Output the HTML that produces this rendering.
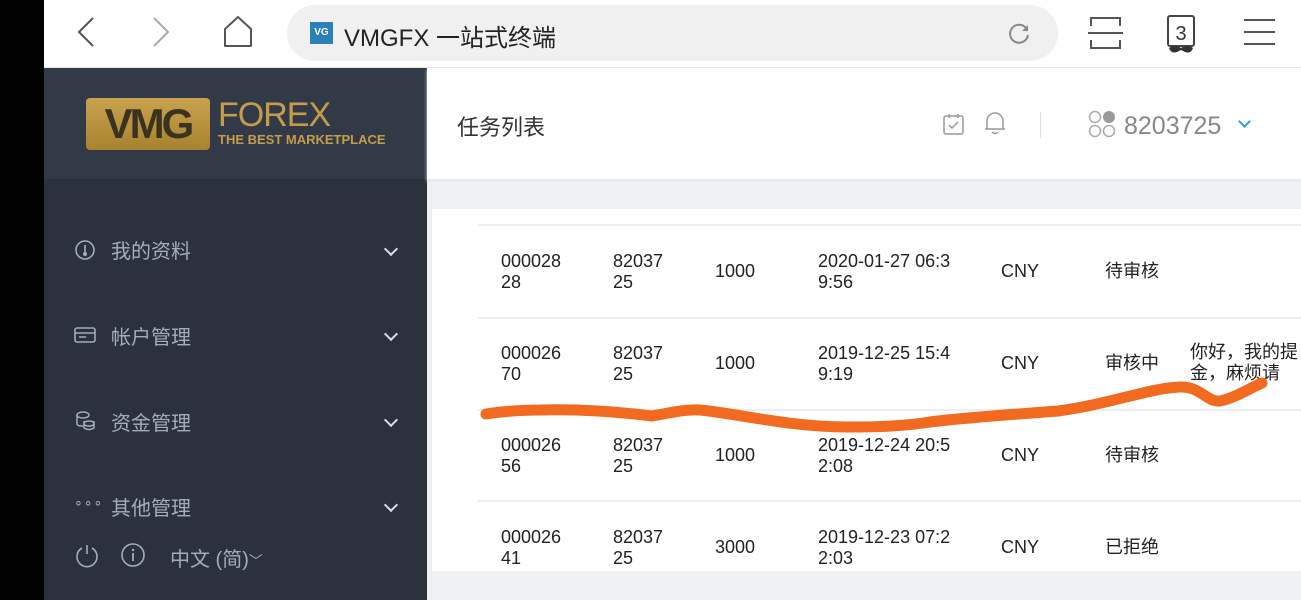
<!DOCTYPE html>
<html><head><meta charset="utf-8"><style>
*{margin:0;padding:0;box-sizing:border-box}
body{width:1301px;height:600px;overflow:hidden;background:#fff;font-family:"Liberation Sans","Noto Sans CJK SC",sans-serif;position:relative}
.abs{position:absolute}
.blk{left:0;top:0;width:44px;height:600px;background:#000}
.top{left:44px;top:0;width:1257px;height:68px;background:#fff;border-bottom:1px solid #e6e6e6}
.url{left:287px;top:5px;width:771px;height:56px;border-radius:28px;background:#f0f0f0}
.side{left:44px;top:68px;width:383px;height:532px;background:#2b313d}
.logo{left:44px;top:68px;width:383px;height:111px;background:#333a47}
.menu{color:#a5adba;font-size:20px;left:111px}
.chev{left:386px;width:10px;height:10px;border-right:2.5px solid #d8dde4;border-bottom:2.5px solid #d8dde4;transform:rotate(45deg)}
.hdr{left:427px;top:68px;width:874px;height:111px;background:#fff;box-shadow:0 2px 3px #e2e5ea}
.content{left:427px;top:180px;width:874px;height:420px;background:#eff1f5}
.card{left:432px;top:209px;width:869px;height:362px;background:#fff}
.line{left:478px;width:823px;height:2px;background:#eceef1}
.c{font-family:"Liberation Sans Narrow","Liberation Sans","Noto Sans CJK SC",sans-serif;font-size:18px;color:#222;line-height:21px}
</style></head><body>
<div class="abs blk"></div>
<div class="abs top"></div>
<svg class="abs" style="left:70px;top:14px" width="40" height="40"><path d="M23 4 L9 18 L23 32" stroke="#555" stroke-width="2" fill="none"/></svg>
<svg class="abs" style="left:145px;top:14px" width="40" height="40"><path d="M9 4 L23 18 L9 32" stroke="#aaa" stroke-width="2" fill="none"/></svg>
<svg class="abs" style="left:222px;top:14px" width="36" height="36"><path d="M3 32 V15 L16 3 L29 15 V32 Z" stroke="#555" stroke-width="2" fill="none" stroke-linejoin="round"/></svg>
<div class="abs url"></div>
<div class="abs" style="left:310px;top:22px;width:23px;height:22px;background:#2d7fb8;color:#fff;font-size:10px;font-weight:bold;line-height:22px;text-align:center">VG</div>
<div class="abs" style="left:344px;top:18px;font-size:24px;color:#222">VMGFX 一站式终端</div>
<svg class="abs" style="left:1006px;top:20px" width="26" height="26"><path d="M20 8 A9 9 0 1 0 22 15" stroke="#888" stroke-width="2" fill="none"/><path d="M22 5 V11 H16" fill="#888"/></svg>
<svg class="abs" style="left:1088px;top:16px" width="36" height="34"><path d="M3 10 V2 H32 V10 M3 24 V32 H32 V24 M0 17 H35" stroke="#555" stroke-width="2" fill="none"/></svg>
<svg class="abs" style="left:1165px;top:14px" width="36" height="40"><rect x="3" y="2" width="26" height="30" rx="2" stroke="#444" stroke-width="2" fill="none"/><text x="16" y="26" font-size="20" text-anchor="middle" fill="#333" font-family="Liberation Sans">3</text><path d="M4 34 Q10 30 16 34 Q22 30 28 34 Q26 40 20 38 L16 36 L12 38 Q6 40 4 34Z" fill="#333"/></svg>
<svg class="abs" style="left:1243px;top:18px" width="34" height="28"><path d="M1 2 H32 M1 14 H32 M1 26 H32" stroke="#555" stroke-width="2"/></svg>

<div class="abs side"></div>
<div class="abs logo"></div>
<div class="abs" style="left:86px;top:98px;width:124px;height:52px;background:linear-gradient(#c9a250,#a8822f);border-radius:4px;color:#3a3320;font-weight:bold;font-size:42px;line-height:52px;text-align:center;letter-spacing:-3px">VMG</div>
<div class="abs" style="left:218px;top:97px;font-size:34px;color:#c59d4a;line-height:36px;letter-spacing:-1px">FOREX</div>
<div class="abs" style="left:218px;top:132px;font-size:13px;font-weight:bold;color:#c59d4a">THE BEST MARKETPLACE</div>

<svg class="abs" style="left:74px;top:239px" width="22" height="22"><circle cx="11" cy="11" r="9" stroke="#a5adba" stroke-width="1.6" fill="none"/><path d="M11 6 V14" stroke="#a5adba" stroke-width="1.6"/><circle cx="11" cy="15" r="2" fill="#a5adba"/></svg>
<div class="abs menu" style="top:235px">我的资料</div><div class="abs chev" style="top:244px"></div>
<svg class="abs" style="left:74px;top:326px" width="22" height="18"><rect x="1" y="2" width="20" height="14" rx="2" stroke="#a5adba" stroke-width="1.6" fill="none"/><path d="M1 7 H21 M5 11 H12" stroke="#a5adba" stroke-width="1.6"/></svg>
<div class="abs menu" style="top:321px">帐户管理</div><div class="abs chev" style="top:329px"></div>
<svg class="abs" style="left:75px;top:410px" width="22" height="22"><ellipse cx="8" cy="5" rx="6" ry="3" stroke="#a5adba" stroke-width="1.5" fill="none"/><path d="M2 5 V14 Q2 16 8 16 M14 11 a5 2.5 0 1 0 0.1 0 M9 11 V18 Q14 21 19 18 V11" stroke="#a5adba" stroke-width="1.5" fill="none"/></svg>
<div class="abs menu" style="top:407px">资金管理</div><div class="abs chev" style="top:415px"></div>
<div class="abs" style="left:74px;top:494px;color:#a5adba;font-size:14px;letter-spacing:1px">∘∘∘</div>
<div class="abs menu" style="top:492px">其他管理</div><div class="abs chev" style="top:500px"></div>
<svg class="abs" style="left:74px;top:543px" width="26" height="26"><path d="M8 5 A10 10 0 1 0 18 5 M13 2 V11" stroke="#a5adba" stroke-width="1.6" fill="none"/></svg>
<svg class="abs" style="left:121px;top:543px" width="26" height="26"><circle cx="12" cy="12" r="11" stroke="#a5adba" stroke-width="1.6" fill="none"/><path d="M12 10 V18" stroke="#a5adba" stroke-width="1.8"/><circle cx="12" cy="7" r="1.2" fill="#a5adba"/></svg>
<div class="abs" style="left:170px;top:543px;color:#a5adba;font-size:20px">中文 (简)<span style="font-size:14px">﹀</span></div>

<div class="abs content"></div>
<div class="abs hdr"></div>
<div class="abs" style="left:457px;top:110px;font-size:22px;color:#333">任务列表</div>
<svg class="abs" style="left:942px;top:112px" width="24" height="24"><rect x="2" y="4" width="19" height="18" rx="2" stroke="#999" stroke-width="1.5" fill="none"/><path d="M7 2 V6 M16 2 V6 M7 13 L10 16 L16 10" stroke="#999" stroke-width="1.5" fill="none"/></svg>
<svg class="abs" style="left:983px;top:110px" width="24" height="26"><path d="M4 19 V11 A8 8 0 0 1 20 11 V19 Z M2 19 H22 M9 22 Q12 25 15 22" stroke="#999" stroke-width="1.5" fill="none"/></svg>
<div class="abs" style="left:1040px;top:112px;width:1px;height:26px;background:#ddd"></div>
<svg class="abs" style="left:1088px;top:110px" width="30" height="30"><circle cx="7" cy="7" r="5.5" stroke="#aaa" stroke-width="1.5" fill="none"/><circle cx="21" cy="7" r="6" fill="#999"/><circle cx="7" cy="21" r="5.5" stroke="#aaa" stroke-width="1.5" fill="none"/><circle cx="21" cy="21" r="5.5" stroke="#aaa" stroke-width="1.5" fill="none"/></svg>
<div class="abs" style="left:1124px;top:112px;font-size:25px;color:#888">8203725</div>
<div class="abs" style="left:1240px;top:117px;width:9px;height:9px;border-right:2px solid #2e9ed6;border-bottom:2px solid #2e9ed6;transform:rotate(45deg)"></div>

<div class="abs card"></div>
<div class="abs line" style="top:224px"></div>
<div class="abs line" style="top:317px"></div>
<div class="abs line" style="top:409px"></div>
<div class="abs line" style="top:500px"></div>

<div class="abs c" style="left:501px;top:251px">000028<br>28</div><div class="abs c" style="left:613px;top:251px">82037<br>25</div><div class="abs c" style="left:715px;top:261px">1000</div><div class="abs c" style="left:818px;top:251px">2020-01-27 06:3<br>9:56</div><div class="abs c" style="left:1001px;top:261px">CNY</div><div class="abs c" style="left:1105px;top:261px">待审核</div>
<div class="abs c" style="left:501px;top:343px">000026<br>70</div><div class="abs c" style="left:613px;top:343px">82037<br>25</div><div class="abs c" style="left:715px;top:353px">1000</div><div class="abs c" style="left:818px;top:343px">2019-12-25 15:4<br>9:19</div><div class="abs c" style="left:1001px;top:353px">CNY</div><div class="abs c" style="left:1105px;top:353px">审核中</div><div class="abs c" style="left:1190px;top:342px;white-space:nowrap">你好，我的提<br>金，麻烦请</div>
<div class="abs c" style="left:501px;top:435px">000026<br>56</div><div class="abs c" style="left:613px;top:435px">82037<br>25</div><div class="abs c" style="left:715px;top:445px">1000</div><div class="abs c" style="left:818px;top:435px">2019-12-24 20:5<br>2:08</div><div class="abs c" style="left:1001px;top:445px">CNY</div><div class="abs c" style="left:1105px;top:445px">待审核</div>
<div class="abs c" style="left:501px;top:527px">000026<br>41</div><div class="abs c" style="left:613px;top:527px">82037<br>25</div><div class="abs c" style="left:715px;top:537px">3000</div><div class="abs c" style="left:818px;top:527px">2019-12-23 07:2<br>2:03</div><div class="abs c" style="left:1001px;top:537px">CNY</div><div class="abs c" style="left:1105px;top:537px">已拒绝</div>

<svg class="abs" style="left:0;top:0" width="1301" height="600"><path d="M486 414 C505 411 520 410 540 410 C580 409 620 412 652 416 C670 413 685 409 700 410 C740 414 790 427 847 427 C880 427 905 426 930 422 C970 417 1020 414 1058 411 C1110 404 1150 388 1180 387 C1200 386 1208 403 1220 401 C1235 398 1250 388 1262 383" stroke="#f26a1f" stroke-width="11" fill="none" stroke-linecap="round" stroke-linejoin="round"/></svg>
</body></html>
